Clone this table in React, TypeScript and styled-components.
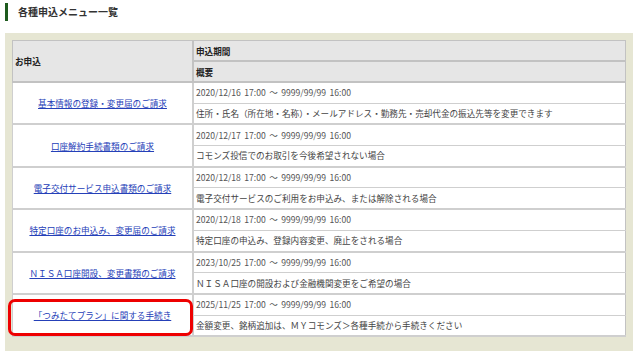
import React from 'react';
import styled, { createGlobalStyle } from 'styled-components';

const GlobalStyle = createGlobalStyle`
  body {
    margin: 0;
    background: #ffffff;
    font-family: "Noto Sans CJK JP", "Noto Sans", sans-serif;
    color: #333333;
  }
`;

type MenuItem = {
  label: string;
  period: string;
  summary: string;
  highlight?: boolean;
};

const items: MenuItem[] = [
  {
    label: '基本情報の登録・変更届のご請求',
    period: '2020/12/16 17:00 ～ 9999/99/99 16:00',
    summary: '住所・氏名（所在地・名称）・メールアドレス・勤務先・売却代金の振込先等を変更できます',
  },
  {
    label: '口座解約手続書類のご請求',
    period: '2020/12/17 17:00 ～ 9999/99/99 16:00',
    summary: 'コモンズ投信でのお取引を今後希望されない場合',
  },
  {
    label: '電子交付サービス申込書類のご請求',
    period: '2020/12/18 17:00 ～ 9999/99/99 16:00',
    summary: '電子交付サービスのご利用をお申込み、または解除される場合',
  },
  {
    label: '特定口座のお申込み、変更届のご請求',
    period: '2020/12/18 17:00 ～ 9999/99/99 16:00',
    summary: '特定口座の申込み、登録内容変更、廃止をされる場合',
  },
  {
    label: 'ＮＩＳＡ口座開設、変更書類のご請求',
    period: '2023/10/25 17:00 ～ 9999/99/99 16:00',
    summary: 'ＮＩＳＡ口座の開設および金融機関変更をご希望の場合',
  },
  {
    label: '「つみたてプラン」に関する手続き',
    period: '2025/11/25 17:00 ～ 9999/99/99 16:00',
    summary: '金額変更、銘柄追加は、ＭＹコモンズ＞各種手続から手続きください',
    highlight: true,
  },
];

const App = () => {
  return (
    <>
      <GlobalStyle />
      <Page>
        <Title>各種申込メニュー一覧</Title>
        <Panel>
          <Table>
            <thead>
              <tr>
                <HeadCell rowSpan={2} $wide>お申込</HeadCell>
                <HeadCell>申込期間</HeadCell>
              </tr>
              <tr>
                <HeadCell>概要</HeadCell>
              </tr>
            </thead>
            <tbody>
              {items.map((item) => (
                <React.Fragment key={item.label}>
                  <tr>
                    <LinkCell rowSpan={2}>
                      <MenuLink href="#">{item.label}</MenuLink>
                      {item.highlight && <Highlight />}
                    </LinkCell>
                    <InfoCell $muted>{item.period}</InfoCell>
                  </tr>
                  <tr>
                    <InfoCell>{item.summary}</InfoCell>
                  </tr>
                </React.Fragment>
              ))}
            </tbody>
          </Table>
        </Panel>
      </Page>
    </>
  );
};

export default App;

const Page = styled.div`
  width: 640px;
  height: 357px;
  padding-top: 3px;
  box-sizing: border-box;
`;

const Title = styled.h1`
  margin: 0 0 12px 5px;
  height: 18px;
  padding-left: 10px;
  border-left: 3px solid #1e5b1e;
  font-size: 10px;
  font-weight: bold;
  line-height: 18px;
  color: #333333;
`;

const Panel = styled.div`
  margin: 0 7px 0 5px;
  padding: 7px 7px 14px 7px;
  background: #e6e6d3;
`;

const Table = styled.table`
  width: 100%;
  border-collapse: collapse;
  background: #ffffff;
  border: 1px solid #c2c2c2;
  font-size: 8.6px;
`;

const HeadCell = styled.th<{ $wide?: boolean }>`
  width: ${(p) => (p.$wide ? '175px' : 'auto')};
  height: 19px;
  padding: 0 2px;
  background: #e6e6e6;
  border: 1px solid #c2c2c2;
  border-right-width: ${(p) => (p.$wide ? '2px' : '1px')};
  border-bottom-width: 2px;
  text-align: left;
  font-weight: bold;
  color: #222222;
`;

const LinkCell = styled.td`
  position: relative;
  padding: 0;
  border: 2px solid #cfcfcf;
  border-left-width: 1px;
  text-align: center;
  vertical-align: middle;
`;

const InfoCell = styled.td<{ $muted?: boolean }>`
  height: 19.7px;
  padding: 0 2px;
  border-top: 1px solid #cfcfcf;
  border-bottom: ${(p) => (p.$muted ? '1px' : '2px')} solid #cfcfcf;
  white-space: nowrap;
  line-height: 19px;
  word-spacing: 1.5px;
  color: ${(p) => (p.$muted ? '#555555' : '#444444')};
`;

const MenuLink = styled.a`
  color: #2540b8;
  text-decoration: underline;
`;

const Highlight = styled.div`
  position: absolute;
  left: -5px;
  right: -1px;
  top: 4px;
  bottom: -1px;
  border: 3px solid #ee0000;
  border-radius: 7px;
  pointer-events: none;
`;
